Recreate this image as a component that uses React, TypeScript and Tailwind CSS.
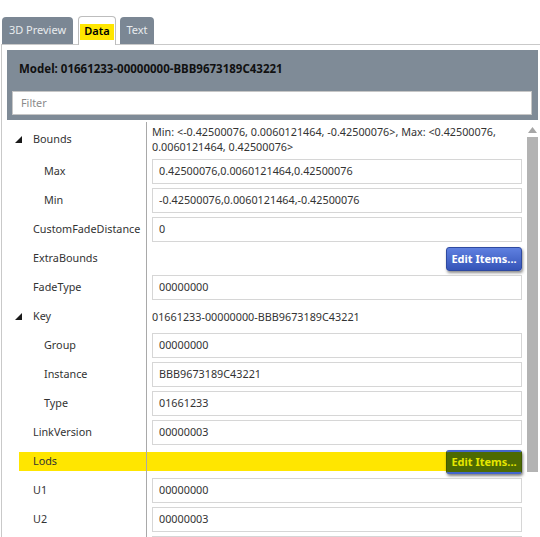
import React from 'react';

type Row = {
    label: string;
    level: 0 | 1;
    expander?: boolean;
    input?: string;
    text?: string[];
    button?: 'blue' | 'green';
    highlight?: boolean;
    tall?: boolean;
};

const rows: Row[] = [
    { label: 'Bounds', level: 0, expander: true, tall: true, text: ['Min: <-0.42500076, 0.0060121464, -0.42500076>, Max: <0.42500076,', '0.0060121464, 0.42500076>'] },
    { label: 'Max', level: 1, input: '0.42500076,0.0060121464,0.42500076' },
    { label: 'Min', level: 1, input: '-0.42500076,0.0060121464,-0.42500076' },
    { label: 'CustomFadeDistance', level: 0, input: '0' },
    { label: 'ExtraBounds', level: 0, button: 'blue' },
    { label: 'FadeType', level: 0, input: '00000000' },
    { label: 'Key', level: 0, expander: true, text: ['01661233-00000000-BBB9673189C43221'] },
    { label: 'Group', level: 1, input: '00000000' },
    { label: 'Instance', level: 1, input: 'BBB9673189C43221' },
    { label: 'Type', level: 1, input: '01661233' },
    { label: 'LinkVersion', level: 0, input: '00000003' },
    { label: 'Lods', level: 0, button: 'green', highlight: true },
    { label: 'U1', level: 0, input: '00000000' },
    { label: 'U2', level: 0, input: '00000003' },
    { label: '', level: 0, input: '' },
];

const Expander = () => (
    <svg width="7" height="7" viewBox="0 0 7 7" className="shrink-0">
        <polygon points="7,0 7,7 0,7" fill="#1a1a1a" />
    </svg>
);

const EditButton = ({ variant }: { variant: 'blue' | 'green' }) =>
    variant === 'blue' ? (
        <button className="w-[76px] h-[24px] rounded-[3px] bg-gradient-to-b from-[#5f80e0] to-[#3554b8] border border-[#2f4aa0] text-white text-[11px] font-bold shadow-[1px_2px_3px_rgba(0,0,0,0.45)] leading-none">
            Edit Items...
        </button>
    ) : (
        <button className="w-[76px] h-[24px] rounded-[3px] bg-[#4d6a02] border border-[#3f5a00] border-t-[2px] border-t-[#4466cc] border-b-[2px] border-b-[#4466cc] text-[#e6e600] text-[11px] font-bold shadow-[1px_2px_3px_rgba(0,0,0,0.5)] leading-none">
            Edit Items...
        </button>
    );

const PropertyRow = ({ row }: { row: Row }) => {
    const labelPad = row.level === 1 ? 'pl-[42px]' : row.expander ? 'pl-[13px]' : 'pl-[31px]';

    return (
        <div className={`flex ${row.tall ? 'h-[35px]' : 'h-[29px]'}`}>
            {/* label column */}
            {row.highlight ? (
                <div className="w-[145px] shrink-0 border-r border-[#a9a9a9] flex items-center">
                    <div className="ml-[17px] flex-1 h-[19px] bg-[#ffe600] flex items-center pl-[14px]">
                        {row.label}
                    </div>
                </div>
            ) : (
                <div className={`w-[145px] shrink-0 border-r border-[#a9a9a9] flex items-center ${labelPad}`}>
                    {row.expander && (
                        <span className="w-[18px] flex items-center">
                            <Expander />
                        </span>
                    )}
                    <span>{row.label}</span>
                </div>
            )}

            {/* value column */}
            <div className="flex-1 flex items-center pl-[5px] pr-[3px] min-w-0">
                {row.input !== undefined && (
                    <div className="w-full h-[25px] border border-[#d6d6d6] flex items-center pl-[6px] whitespace-nowrap">
                        {row.input}
                    </div>
                )}
                {row.text && (
                    <div className="leading-[15px] pt-[2px] self-start whitespace-nowrap">
                        {row.text.map((t, i) => (
                            <div key={i} className={row.tall ? '' : 'pt-[5px]'}>{t}</div>
                        ))}
                    </div>
                )}
                {row.button && !row.highlight && (
                    <div className="w-full flex justify-end">
                        <EditButton variant={row.button} />
                    </div>
                )}
                {row.button && row.highlight && (
                    <div className="-ml-[5px] flex-1 h-[19px] bg-[#ffe600] flex items-center justify-end">
                        <EditButton variant={row.button} />
                    </div>
                )}
            </div>
        </div>
    );
};

export default function App() {
    return (
        <div className="w-[540px] h-[537px] overflow-hidden bg-white text-[10.8px] text-[#333] font-['Noto_Sans','Open_Sans',sans-serif]">
            {/* Tabs */}
            <div className="h-[45px] flex items-end pl-[2px] relative z-10">
                <div className="w-[71px] h-[27px] mb-[1px] rounded-t-[4px] bg-[#7b8794] text-[#e8ebee] text-[11px] flex items-center justify-center">
                    3D Preview
                </div>
                <div className="ml-[5px] w-[38px] h-[29px] rounded-t-[4px] bg-white border border-b-0 border-[#bdbdbd] flex items-center justify-center pt-[1px]">
                    <span className="bg-[#ffe600] px-[4px] h-[16px] flex items-center font-semibold text-[11px] text-black">Data</span>
                </div>
                <div className="ml-[4px] w-[34px] h-[27px] mb-[1px] rounded-t-[4px] bg-[#7b8794] text-[#e8ebee] text-[11px] flex items-center justify-center">
                    Text
                </div>
            </div>

            {/* Panel */}
            <div className="-mt-[1px] ml-[1px] border-l border-t border-[#c9c9c9] h-[493px]">
                {/* Header */}
                <div className="mt-[5px] ml-[5px] mr-[2px] h-[70px] bg-[#7f8b97] pt-[10px] px-[5px]">
                    <div className="h-[18px] flex items-center pl-[7px] font-bold text-[11.5px] text-[#111]">
                        Model: 01661233-00000000-BBB9673189C43221
                    </div>
                    <div className="mt-[13px] mr-[1px] h-[24px] bg-white border border-[#c6c6c6] flex items-center pl-[8px] text-[#8a8a8a]">
                        Filter
                    </div>
                </div>

                {/* Property grid */}
                <div className="mt-[2px] flex">
                    <div className="w-[523px] shrink-0">
                        {rows.map((r, i) => (
                            <PropertyRow key={i} row={r} />
                        ))}
                    </div>
                    <div className="ml-[2px] w-[11px] flex flex-col items-center">
                        <svg width="9" height="6" viewBox="0 0 9 6" className="mt-[5px]">
                            <polygon points="4.5,0 9,6 0,6" fill="#a6a6a6" />
                        </svg>
                        <div className="mt-[4px] w-[11px] h-[335px] bg-[#b3b3b3]"></div>
                    </div>
                </div>
            </div>
        </div>
    );
}
